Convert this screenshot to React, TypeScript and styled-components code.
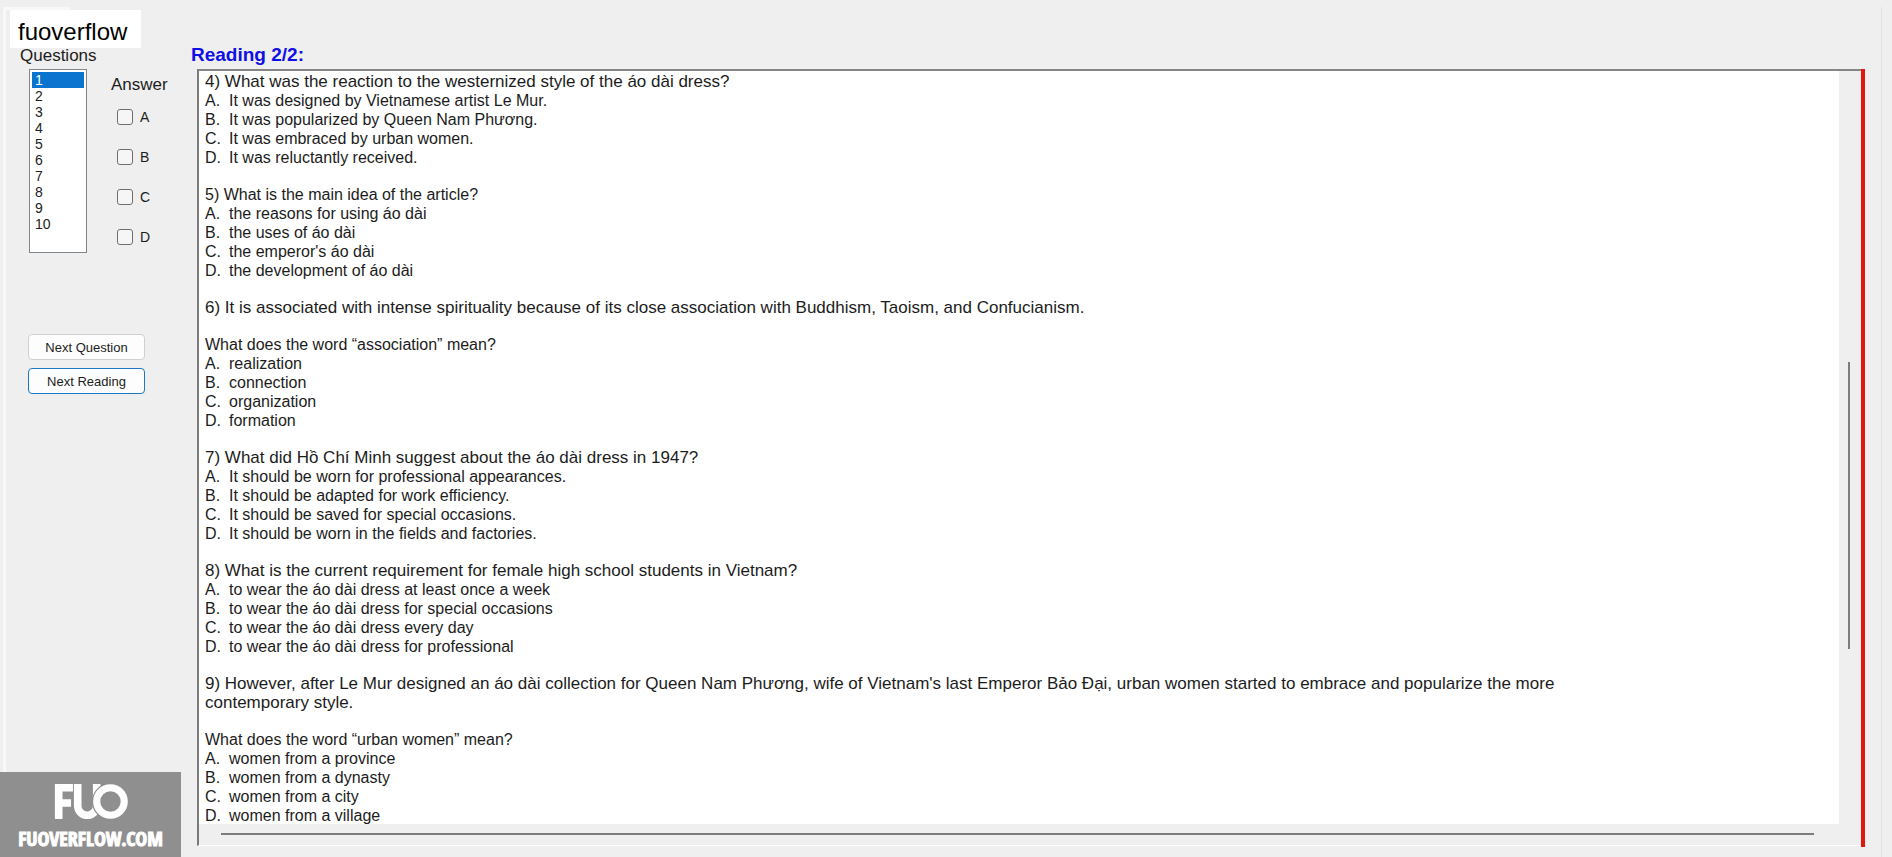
import React, { useState } from 'react';
import styled, { createGlobalStyle, css } from 'styled-components';

const GlobalStyle = createGlobalStyle`
  *, *::before, *::after { box-sizing: border-box; }
  html, body { margin: 0; height: 100%; }
  #root { height: 100%; }
  body {
    background: #efefef;
    color: #1c1c1c;
    font-family: 'Liberation Sans', Arial, sans-serif;
    font-size: 16px;
  }
`;

const Page = styled.div`
  position: relative;
  height: 100vh;
  overflow: hidden;
  padding: 7px 10px 0 3px;
`;

const Group = styled.div`
  height: 100%;
  display: flex;
  border-left: 3px solid #f8f8f8;
  border-right: 1px solid #e2e2e2;
`;

const Sidebar = styled.aside`
  flex: none;
  width: 185px;
`;

const TabEdge = styled.div`
  width: 64px;
  height: 3px;
  background: #f8f8f8;
`;

const Brand = styled.h1`
  width: 131px;
  height: 38px;
  margin: 0 0 0 4px;
  padding-left: 8px;
  background: #fff;
  color: #000;
  font-size: 24px;
  font-weight: 400;
  line-height: 44px;
`;

const Pickers = styled.div`
  display: flex;
  height: 286px;
  padding-left: 4px;
`;

const Column = styled.div<{ $answer?: boolean }>`
  display: flex;
  flex-direction: column;
  ${(p) =>
    p.$answer
      ? css`
          padding-top: 27px;
          margin-left: 4px;
        `
      : css`
          width: 97px;
        `}
`;

const Caption = styled.label`
  padding: 0 0 5px 10px;
  font-size: 17px;
  line-height: 16px;
`;

const AnswerCaption = styled.span`
  font-size: 17px;
  line-height: 20px;
`;

const NumberList = styled.select`
  width: 58px;
  height: 184px;
  margin-left: 19px;
  padding: 2px;
  border: 1px solid #7f868c;
  border-radius: 0;
  background: #fff;
  outline: none;
  overflow: hidden;
  font-family: inherit;
  font-size: 14px;
  scrollbar-width: none;

  option {
    min-height: 0;
    height: 16px;
    padding: 0 3px;
    color: #222;
    line-height: 16px;
  }

  option:checked {
    background: #0a74cf linear-gradient(#0a74cf, #0a74cf);
    color: #fff;
  }
`;

const Choice = styled.label`
  display: flex;
  align-items: center;
  gap: 7px;
  height: 40px;
  padding-left: 6px;
  font-size: 14px;
`;

const Choices = styled.div`
  padding-top: 2px;
`;

const Tick = styled.input`
  appearance: none;
  width: 16px;
  height: 16px;
  margin: 0;
  border: 1px solid #6e6e6e;
  border-radius: 3px;
  background: #f6f6f6;

  &:checked {
    background: #0a74cf;
  }
`;

const Actions = styled.div`
  display: flex;
  flex-direction: column;
  gap: 8px;
  width: 117px;
  margin-left: 22px;
`;

const ActionButton = styled.button<{ $focused?: boolean }>`
  height: 26px;
  padding: 0;
  border: 1px solid ${(p) => (p.$focused ? '#1b78c4' : '#d0d0d0')};
  border-radius: 4px;
  background: #fdfdfd;
  color: #1c1c1c;
  font-family: inherit;
  font-size: 13px;
`;

const Main = styled.main`
  flex: 1;
  min-width: 0;
  display: flex;
  flex-direction: column;
  padding: 36px 16px 10px 0;
`;

const Heading = styled.h2`
  margin: 0;
  height: 26px;
  color: #0f0fe6;
  font-size: 19px;
  line-height: 24px;
`;

const Reader = styled.section`
  flex: 1;
  min-height: 0;
  display: flex;
  margin-left: 6px;
  padding-bottom: 1px;
  border-right: 4px solid #e01810;
`;

const Frame = styled.div`
  flex: 1;
  min-width: 0;
  display: grid;
  grid-template-columns: minmax(0, 1fr) 22px;
  grid-template-rows: minmax(0, 1fr) 21px;
  border-top: 2px solid #858585;
  border-left: 2px solid #7a7a7a;
  border-bottom: 1px solid #fff;
`;

const Passage = styled.div`
  overflow: hidden;
  padding: 1px 6px 0;
  background: #fff;
`;

const Block = styled.div`
  max-width: 1360px;
  margin-bottom: 18px;
  line-height: 19px;
`;

const Prompt = styled.p<{ $large?: boolean }>`
  margin: 0;
  font-size: ${(p) => (p.$large ? 17 : 16)}px;
`;

const Options = styled.ol`
  margin: 0;
  padding: 0;
  list-style: none;
`;

const Option = styled.li`
  display: flex;
`;

const Letter = styled.span`
  width: 24px;
`;

const VerticalTrack = styled.div`
  display: grid;
  grid-template-rows: 291fr 287fr 175fr;
  justify-items: center;
  padding-right: 2px;
`;

const VerticalThumb = styled.div`
  grid-row: 2;
  width: 2px;
  background: #7d7d7d;
`;

const HorizontalTrack = styled.div`
  display: flex;
  align-items: center;
  padding: 0 25px 2px 22px;
`;

const HorizontalThumb = styled.div`
  flex: 1;
  height: 2px;
  background: #7d7d7d;
`;

const Watermark = styled.div`
  position: absolute;
  left: 0;
  bottom: 0;
  display: flex;
  flex-direction: column;
  align-items: center;
  width: 181px;
  height: 85px;
  padding-top: 11px;
  background: #8f8f8f;
  color: #fff;
`;

const WatermarkText = styled.span`
  font-family: 'Open Sans Condensed', 'Roboto Condensed', sans-serif;
  font-size: 20px;
  font-weight: 800;
  line-height: 36px;
  -webkit-text-stroke: 1px #fff;
`;

type Item = { prompt: string; large?: boolean; options?: string[] };

const items: Item[] = [
  {
    prompt: '4) What was the reaction to the westernized style of the áo dài dress?',
    large: true,
    options: [
      'It was designed by Vietnamese artist Le Mur.',
      'It was popularized by Queen Nam Phương.',
      'It was embraced by urban women.',
      'It was reluctantly received.',
    ],
  },
  {
    prompt: '5) What is the main idea of the article?',
    options: [
      'the reasons for using áo dài',
      'the uses of áo dài',
      "the emperor's áo dài",
      'the development of áo dài',
    ],
  },
  {
    prompt:
      '6) It is associated with intense spirituality because of its close association with Buddhism, Taoism, and Confucianism.',
    large: true,
  },
  {
    prompt: 'What does the word “association” mean?',
    options: ['realization', 'connection', 'organization', 'formation'],
  },
  {
    prompt: '7) What did Hồ Chí Minh suggest about the áo dài dress in 1947?',
    large: true,
    options: [
      'It should be worn for professional appearances.',
      'It should be adapted for work efficiency.',
      'It should be saved for special occasions.',
      'It should be worn in the fields and factories.',
    ],
  },
  {
    prompt: '8) What is the current requirement for female high school students in Vietnam?',
    large: true,
    options: [
      'to wear the áo dài dress at least once a week',
      'to wear the áo dài dress for special occasions',
      'to wear the áo dài dress every day',
      'to wear the áo dài dress for professional',
    ],
  },
  {
    prompt:
      "9) However, after Le Mur designed an áo dài collection for Queen Nam Phương, wife of Vietnam's last Emperor Bảo Đại, urban women started to embrace and popularize the more contemporary style.",
    large: true,
  },
  {
    prompt: 'What does the word “urban women” mean?',
    options: [
      'women from a province',
      'women from a dynasty',
      'women from a city',
      'women from a village',
    ],
  },
];

const letters = ['A', 'B', 'C', 'D'];
const numbers = Array.from({ length: 10 }, (_, i) => i + 1);

function Logo() {
  return (
    <svg width="78" height="40" viewBox="0 0 78 40" fill="none" stroke="#fff" role="img" aria-label="FUO">
      <path d="M5 38V5H20M5 21H18" strokeWidth="8" />
      <path d="M25 1V24A10 10 0 0 0 45 24V1" strokeWidth="8" />
      <circle cx="59.5" cy="19.5" r="18.5" stroke="#8f8f8f" strokeWidth="2" />
      <circle cx="59.5" cy="19.5" r="14.5" fill="#8f8f8f" strokeWidth="7.5" />
    </svg>
  );
}

export default function App() {
  const [current, setCurrent] = useState(1);

  return (
    <Page>
      <GlobalStyle />
      <Group>
        <Sidebar>
          <TabEdge />
          <Brand>fuoverflow</Brand>
          <Pickers>
            <Column>
              <Caption htmlFor="questions">Questions</Caption>
              <NumberList
                id="questions"
                size={10}
                value={current}
                onChange={(e) => setCurrent(Number(e.target.value))}
              >
                {numbers.map((n) => (
                  <option key={n} value={n}>
                    {n}
                  </option>
                ))}
              </NumberList>
            </Column>
            <Column $answer>
              <AnswerCaption>Answer</AnswerCaption>
              <Choices>
                {letters.map((l) => (
                  <Choice key={l}>
                    <Tick type="checkbox" />
                    {l}
                  </Choice>
                ))}
              </Choices>
            </Column>
          </Pickers>
          <Actions>
            <ActionButton type="button" onClick={() => setCurrent((current % 10) + 1)}>
              Next Question
            </ActionButton>
            <ActionButton type="button" $focused>
              Next Reading
            </ActionButton>
          </Actions>
        </Sidebar>
        <Main>
          <Heading>Reading 2/2:</Heading>
          <Reader>
            <Frame>
              <Passage>
                {items.map((item) => (
                  <Block key={item.prompt}>
                    <Prompt $large={item.large}>{item.prompt}</Prompt>
                    {item.options && (
                      <Options>
                        {item.options.map((o, i) => (
                          <Option key={o}>
                            <Letter>{letters[i]}.</Letter>
                            {o}
                          </Option>
                        ))}
                      </Options>
                    )}
                  </Block>
                ))}
              </Passage>
              <VerticalTrack>
                <VerticalThumb />
              </VerticalTrack>
              <HorizontalTrack>
                <HorizontalThumb />
              </HorizontalTrack>
            </Frame>
          </Reader>
        </Main>
      </Group>
      <Watermark>
        <Logo />
        <WatermarkText>FUOVERFLOW.COM</WatermarkText>
      </Watermark>
    </Page>
  );
}
